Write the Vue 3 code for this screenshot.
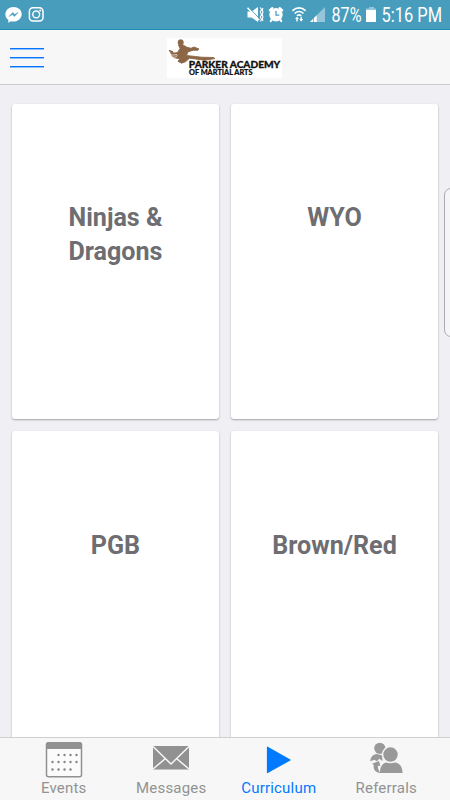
<script setup>
const programs = ['Ninjas & Dragons', 'WYO', 'PGB', 'Brown/Red']
const dots = [
  [13, 14], [19, 14], [25, 14], [31, 14],
  [7, 21], [13, 21], [19, 21], [25, 21], [31, 21],
  [7, 28.5], [13, 28.5], [19, 28.5], [25, 28.5]
]
</script>

<template>
  <div class="screen">
    <header class="status">
      <svg class="status-svg" width="450" height="29" viewBox="0 0 450 29">
        <g fill="#fff">
          <path d="M13.500 7C9 7 5.400 10.200 5.400 14.200c0 2.300 1 4.200 2.900 5.500v3l2.700-1.500c.8.200 1.600.3 2.500.3 4.600 0 8.200-3.200 8.200-7.300S18.100 7 13.500 7z" />
          <path d="M9 16.500l3.700-4 2 1.900 3.400-1.900-3.700 4-2-1.900z" fill="#489dbd" stroke="#489dbd" stroke-width=".5" />
        </g>
        <g fill="none" stroke="#fff" stroke-width="1.500">
          <rect x="29.400" y="7.700" width="13.600" height="13.400" rx="3.500" />
          <circle cx="36.200" cy="14.400" r="3.400" />
        </g>
        <circle cx="40.200" cy="10.500" r="1" fill="#fff" />

        <path d="M247.500 11.500h4l6.500-4.500v15l-6.500-4.500h-4z" fill="#fff" />
        <path d="M248.500 7.300l11.500 11.700" stroke="#489dbd" stroke-width="1" />
        <path d="M247.500 7.800l11.800 12.500" stroke="#fff" stroke-width="1.500" />
        <path d="M260.300 7.500l1.200 2-1.200 2.500 1.200 2.500-1.200 2.500 1.200 2.500-1 2M263 8l-.8 2 .8 2-.8 2.500.8 2.500-.8 2 .8 2" fill="none" stroke="#fff" stroke-width="1.100" />

        <circle cx="276" cy="14.700" r="6.700" fill="#fff" />
        <path d="M269.800 10.400l2.500-2.300M279.700 8.100l2.500 2.300M271.800 19.500l-1 1.500M280.200 19.500l1 1.500" stroke="#fff" stroke-width="2.200" stroke-linecap="round" />
        <path d="M276 11v4.200h3.300" fill="none" stroke="#489dbd" stroke-width="1.300" />

        <g fill="none" stroke="#fff" stroke-width="1.700" stroke-linecap="round">
          <path d="M293 10.300c3.200-3.200 8.900-3.200 12.100 0M295.200 13c2.100-2 5.600-2 7.700 0M297.500 15.400c1-.8 2.200-.8 3.200 0" />
        </g>
        <path d="M295 19l2-2.300 2 2.300h-1.300v2.500h-1.400V19zM299.200 19h1.300v-2.300h1.400V19h1.300l-2 2.700z" fill="#fff" />

        <path d="M325 7v15h-15z" fill="#94c5d8" />
        <path d="M316.700 15.300V22H310z" fill="#fff" />
        <path d="M313.500 17v5" stroke="#489dbd" stroke-width=".7" />
        <text x="331.500" y="21.500" textLength="30" lengthAdjust="spacingAndGlyphs">87%</text>
        <path d="M369 7h5v1.500h2V11h-10V8.500h3z" fill="#94c5d8" />
        <path d="M366 10h10v12h-10z" fill="#fff" />
        <text x="442" y="21.500" text-anchor="end" textLength="60.500" lengthAdjust="spacingAndGlyphs">5:16 PM</text>
      </svg>
    </header>

    <nav class="navbar">
      <button class="menu" aria-label="Menu"><i></i><i></i><i></i></button>
      <svg class="logo" width="115" height="40" viewBox="0 0 115 40">
        <path d="M0 0h115v40H0z" fill="#fff" />
        <g fill="#8b6745" stroke="#8b6745" stroke-linejoin="round">
          <ellipse cx="13.700" cy="4.500" rx="2.800" ry="3" stroke-width=".4" />
          <path d="M11.500 7l4.500 0 4 2.300 4 1 3-1.300 5 2-1 1.200-4.500 0-5.500 1.600-1.500 3.700 9 1 6 .700 12 .3 1.500 1-10 1.700-9.500-1.200-6-.8-4 3.500-4 1.500-3.500-2 2-2.500-6-1-2-2-1.500-3.500 4 .8 3-.5 2.500-4z" stroke-width=".9" />
          <path d="M2 12.500l4 1.500" stroke-width="1.500" />
        </g>
        <path d="M1.500 16.300l4.500.8 4-.6M3 19.500l5.500-.5 2-1.500" stroke="#fff" stroke-width=".7" fill="none" />
        <text class="logo-name" x="21.800" y="30.200" textLength="91.500" lengthAdjust="spacingAndGlyphs">PARKER ACADEMY</text>
        <text class="logo-sub" x="22" y="37.400" textLength="63.500" lengthAdjust="spacingAndGlyphs">OF MARTIAL ARTS</text>
      </svg>
    </nav>

    <main class="grid">
      <article v-for="name in programs" :key="name" class="card">
        <h2>{{ name }}</h2>
      </article>
    </main>

    <div class="edge-handle"></div>

    <footer class="tabs">
      <a class="tab">
        <svg width="38" height="38" viewBox="0 0 38 38">
          <rect x="1.500" y="1.700" width="35" height="34" rx="2" fill="#fbfbfb" stroke="#919191" stroke-width="1.500" />
          <path d="M1 8V3.500q0-2 2-2h32q2 0 2 2V8z" fill="#919191" />
          <circle v-for="(dot, i) in dots" :key="i" :cx="dot[0] + .5" :cy="dot[1]" r="1.200" fill="#858585" />
        </svg>
        <span>Events</span>
      </a>
      <a class="tab">
        <svg width="38" height="38" viewBox="0 0 38 38">
          <path d="M1 5h36v23.500H1z" fill="#919191" />
          <path d="M1 5.500L19 23 37 5.500M1 28l12.500-10.500M37 28L24.500 17.500" fill="none" stroke="#f7f7f7" stroke-width="1.500" />
        </svg>
        <span>Messages</span>
      </a>
      <a class="tab active">
        <svg width="38" height="38" viewBox="0 0 38 38">
          <path d="M7.500 6.200L30 19 7.500 31.500z" fill="#007aff" stroke="#007aff" stroke-width="1.200" stroke-linejoin="round" />
        </svg>
        <span>Curriculum</span>
      </a>
      <a class="tab">
        <svg width="38" height="38" viewBox="0 0 38 38">
          <g fill="#999">
            <circle cx="12.800" cy="7.300" r="5.600" />
            <path d="M3.300 20.200c.2-4 2.700-7 6.500-7.200l6 1.500-.5 5.500-3-2.300-2.500 2.600-2.500-1.600z" />
            <path d="M5 22.800l7-2.800 1.500 5-2.500-.3c-.3 2.300.5 4.300 2.300 7.300-5-.8-7.300-3.500-6.500-8z" />
            <path d="M13 32c-.3-5.500 2-9.300 6-10.500h10c4.500 1.500 6.500 5 6.500 10.500z" />
            <circle cx="23.500" cy="13.600" r="8" stroke="#f7f7f7" stroke-width="1.500" />
          </g>
        </svg>
        <span>Referrals</span>
      </a>
    </footer>
  </div>
</template>

<style>
body {
  margin: 0;
  overflow: hidden;
}
</style>

<style scoped>
.screen {
  position: relative;
  display: flex;
  flex-direction: column;
  width: 450px;
  height: 800px;
  overflow: hidden;
  background: #efeff4;
  font-family: Roboto, sans-serif;
}
.status {
  box-sizing: border-box;
  flex: 0 0 30px;
  background: #489dbd;
  border-bottom: 1px solid #178fb2;
}
.status-svg {
  display: block;
}
.status-svg text {
  fill: #fff;
  font: 400 19.500px Roboto, sans-serif;
}
.navbar {
  box-sizing: border-box;
  display: flex;
  flex: 0 0 55px;
  align-items: flex-start;
  padding: 8px 10px 6px;
  background: #f7f7f8;
  border-bottom: 1px solid #cacacd;
}
.menu {
  display: flex;
  flex-direction: column;
  gap: 7px;
  width: 34px;
  margin: 10px 123px 0 0;
  padding: 0;
  border: 0;
  background: none;
}
.menu i {
  box-sizing: border-box;
  height: 2px;
  background: #8cc0ff;
  border-top: 1px solid #0874ff;
}
.logo {
  display: block;
}
.logo-name {
  font: 900 9px Lato, sans-serif;
  fill: #111;
  stroke: #111;
  stroke-width: .3px;
}
.logo-sub {
  font: 900 6.500px Lato, sans-serif;
  fill: #111;
  stroke: #111;
  stroke-width: .2px;
}
.grid {
  display: grid;
  flex: 1;
  grid-template-columns: 207px 207px;
  grid-auto-rows: 315.200px;
  gap: 12.200px 12px;
  min-height: 0;
  padding: 19px 12px 0;
  overflow: hidden;
}
.card {
  box-sizing: border-box;
  padding: 97.200px 40px 0;
  background: #fff;
  border-radius: 3px;
  box-shadow: 0 1px 2px rgba(0, 0, 0, .32);
}
.card h2 {
  margin: 0;
  color: #6d6d72;
  font-size: 25.100px;
  font-weight: 700;
  line-height: 34px;
  text-align: center;
}
.edge-handle {
  position: absolute;
  top: 188px;
  right: -8px;
  box-sizing: border-box;
  width: 14px;
  height: 149px;
  background: #f5f5f8;
  border: 1px solid #ababaf;
  border-radius: 7px;
}
.tabs {
  z-index: 1;
  box-sizing: border-box;
  display: flex;
  flex: 0 0 63px;
  padding: 3px 10px 0;
  background: #f7f7f7;
  border-top: 1px solid #cfcfd2;
}
.tab {
  display: flex;
  flex: 1;
  flex-direction: column;
  align-items: center;
  color: #929292;
  font-size: 15px;
  line-height: 19px;
  letter-spacing: .2px;
}
.tab.active {
  color: #007aff;
}
</style>
